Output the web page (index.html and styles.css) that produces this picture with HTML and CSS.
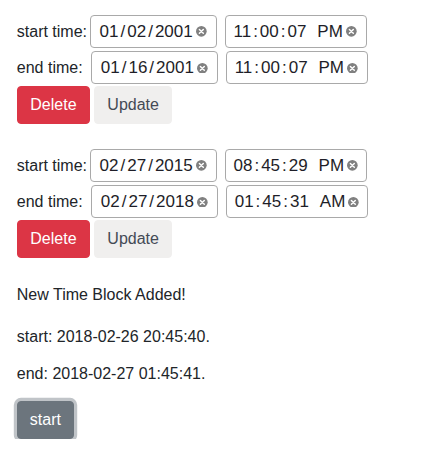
FILE: index.html
```html
<!DOCTYPE html>
<html>
<head>
<meta charset="utf-8">
<link rel="stylesheet" href="styles.css">
</head>
<body>
<div class="page">
  <div class="block">
    <div class="row">
      <span class="label">start time:</span>
      <div class="field date">
        <span class="seg">01</span><span class="sep">/</span><span class="seg">02</span><span class="sep">/</span><span class="seg">2001</span>
        <svg class="clear" viewBox="0 0 12 12"><circle cx="6" cy="6" r="6"/><path d="M3.8 3.8 L8.2 8.2 M8.2 3.8 L3.8 8.2"/></svg>
      </div>
      <div class="field time">
        <span class="seg">11</span><span class="sep">:</span><span class="seg">00</span><span class="sep">:</span><span class="seg">07</span><span class="ampm">PM</span>
        <svg class="clear" viewBox="0 0 12 12"><circle cx="6" cy="6" r="6"/><path d="M3.8 3.8 L8.2 8.2 M8.2 3.8 L3.8 8.2"/></svg>
      </div>
    </div>
    <div class="row row-end">
      <span class="label">end time:</span>
      <div class="field date">
        <span class="seg">01</span><span class="sep">/</span><span class="seg">16</span><span class="sep">/</span><span class="seg">2001</span>
        <svg class="clear" viewBox="0 0 12 12"><circle cx="6" cy="6" r="6"/><path d="M3.8 3.8 L8.2 8.2 M8.2 3.8 L3.8 8.2"/></svg>
      </div>
      <div class="field time">
        <span class="seg">11</span><span class="sep">:</span><span class="seg">00</span><span class="sep">:</span><span class="seg">07</span><span class="ampm">PM</span>
        <svg class="clear" viewBox="0 0 12 12"><circle cx="6" cy="6" r="6"/><path d="M3.8 3.8 L8.2 8.2 M8.2 3.8 L3.8 8.2"/></svg>
      </div>
    </div>
    <div class="actions">
      <button class="btn btn-danger">Delete</button>
      <button class="btn btn-light">Update</button>
    </div>
  </div>

  <div class="block">
    <div class="row">
      <span class="label">start time:</span>
      <div class="field date">
        <span class="seg">02</span><span class="sep">/</span><span class="seg">27</span><span class="sep">/</span><span class="seg">2015</span>
        <svg class="clear" viewBox="0 0 12 12"><circle cx="6" cy="6" r="6"/><path d="M3.8 3.8 L8.2 8.2 M8.2 3.8 L3.8 8.2"/></svg>
      </div>
      <div class="field time">
        <span class="seg">08</span><span class="sep">:</span><span class="seg">45</span><span class="sep">:</span><span class="seg">29</span><span class="ampm">PM</span>
        <svg class="clear" viewBox="0 0 12 12"><circle cx="6" cy="6" r="6"/><path d="M3.8 3.8 L8.2 8.2 M8.2 3.8 L3.8 8.2"/></svg>
      </div>
    </div>
    <div class="row row-end">
      <span class="label">end time:</span>
      <div class="field date">
        <span class="seg">02</span><span class="sep">/</span><span class="seg">27</span><span class="sep">/</span><span class="seg">2018</span>
        <svg class="clear" viewBox="0 0 12 12"><circle cx="6" cy="6" r="6"/><path d="M3.8 3.8 L8.2 8.2 M8.2 3.8 L3.8 8.2"/></svg>
      </div>
      <div class="field time">
        <span class="seg">01</span><span class="sep">:</span><span class="seg">45</span><span class="sep">:</span><span class="seg">31</span><span class="ampm">AM</span>
        <svg class="clear" viewBox="0 0 12 12"><circle cx="6" cy="6" r="6"/><path d="M3.8 3.8 L8.2 8.2 M8.2 3.8 L3.8 8.2"/></svg>
      </div>
    </div>
    <div class="actions">
      <button class="btn btn-danger">Delete</button>
      <button class="btn btn-light">Update</button>
    </div>
  </div>

  <p class="msg msg-title">New Time Block Added!</p>
  <p class="msg msg-start">start: 2018-02-26 20:45:40.</p>
  <p class="msg msg-end">end: 2018-02-27 01:45:41.</p>
  <button class="btn btn-secondary btn-focus">start</button>
</div>
</body>
</html>
```

FILE: styles.css
```css
html, body {
  margin: 0;
  padding: 0;
  background: #ffffff;
}

body {
  font-family: "Liberation Sans", Arial, sans-serif;
  font-size: 16px;
  line-height: 24px;
  color: #212529;
}

.page {
  padding: 15px 0 0 16.8px;
}

.block {
  margin-bottom: 25px;
}

.row {
  display: flex;
  align-items: center;
  height: 33px;
  margin-bottom: 3.4px;
}

.row-end {
  margin-bottom: 1.7px;
}

.label {
  width: 73.2px;
  flex: none;
  white-space: nowrap;
}

.row-end .label {
  width: 74.4px;
}

.field {
  box-sizing: border-box;
  height: 33px;
  display: flex;
  align-items: center;
  border: 1px solid #a9a9a9;
  border-radius: 4px;
  background: #ffffff;
  color: #1e1e28;
  font-size: 17px;
  flex: none;
}

.date {
  width: 127px;
  padding-left: 8.6px;
}

.time {
  width: 142.3px;
  margin-left: 7.7px;
  padding-left: 7.8px;
}

.seg {
  display: inline-block;
}

.sep {
  display: inline-block;
  margin: 0 2px;
}

.ampm {
  display: inline-block;
  margin-left: 10.9px;
}

.clear {
  width: 10.7px;
  height: 10.7px;
  margin-left: 3.2px;
  flex: none;
}

.clear circle {
  fill: #808080;
}

.clear path {
  stroke: #ffffff;
  stroke-width: 1.6;
  stroke-linecap: round;
}

.actions {
  display: flex;
  gap: 4.3px;
}

.btn {
  font-family: "Liberation Sans", Arial, sans-serif;
  font-size: 16px;
  line-height: 24px;
  padding: 6px 12px;
  border: 1px solid transparent;
  border-radius: 4px;
  cursor: pointer;
}

.btn-danger {
  background: #dc3545;
  border-color: #dc3545;
  color: #ffffff;
  padding: 6px 12.5px;
}

.btn-light {
  background: #f0efee;
  border-color: #f0efee;
  color: #444a55;
}

.btn-secondary {
  background: #6c757d;
  border-color: #6c757d;
  color: #ffffff;
}

.btn-focus {
  box-shadow: 0 0 0 3.2px rgba(130, 138, 145, 0.5);
}

.msg {
  margin: 0;
}

.msg-title {
  margin-bottom: 18px;
}

.msg-start {
  margin-bottom: 13px;
}

.msg-end {
  margin-bottom: 15px;
}
```
